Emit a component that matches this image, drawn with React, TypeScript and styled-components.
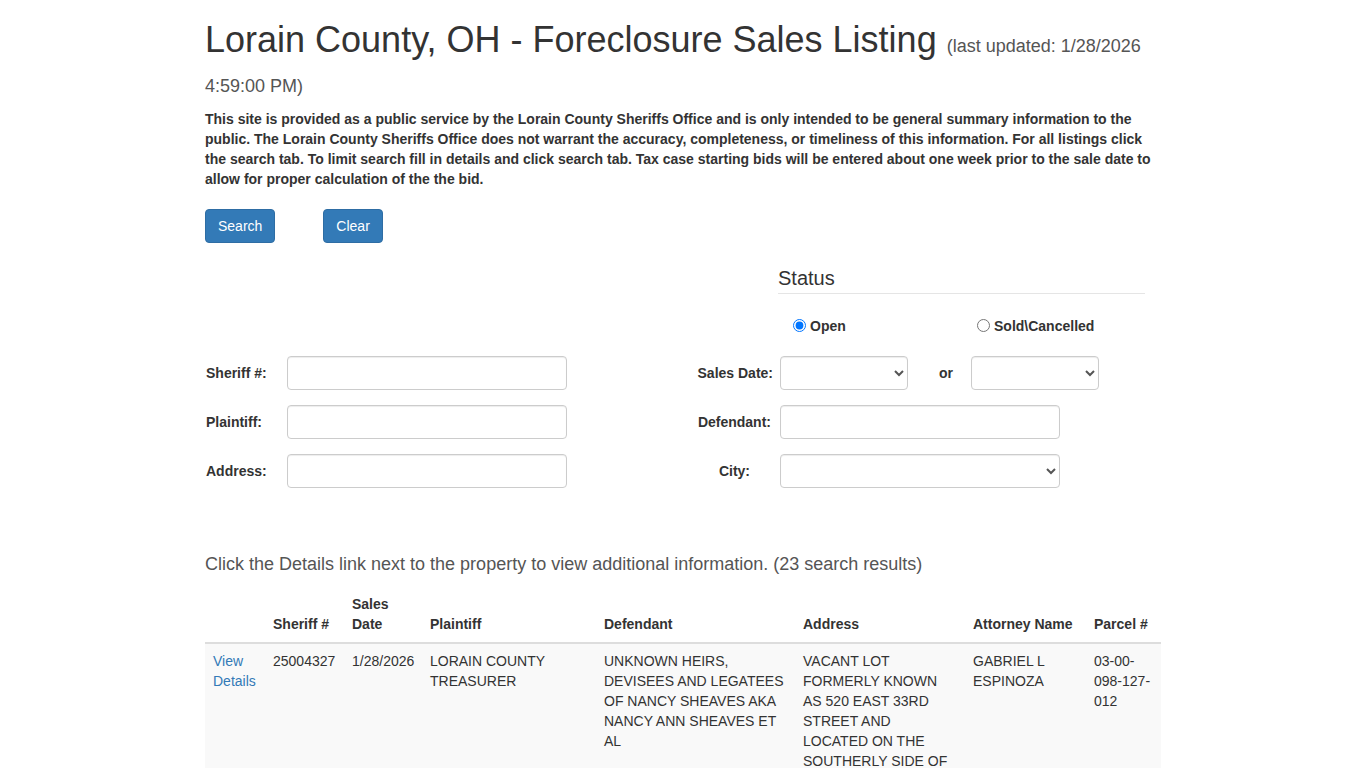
import React from "react";
import styled, { createGlobalStyle } from "styled-components";

const Global = createGlobalStyle`
  html, body { margin: 0; padding: 0; background: #fff; }
  body {
    font-family: "Liberation Sans", Arial, Helvetica, sans-serif;
    font-size: 14px;
    line-height: 1.428571;
    color: #333;
  }
  * { box-sizing: border-box; }
`;

const Page = styled.div`
  width: 956px;
  margin: 0 auto;
`;

const Title = styled.h1`
  font-size: 36px;
  font-weight: 500;
  line-height: 1.1;
  margin: 20px 0 10px;
  color: #333;
`;

const Updated = styled.small`
  font-size: 18px;
  font-weight: 400;
  color: #555;
`;

const Notice = styled.p`
  font-size: 14px;
  font-weight: 700;
  line-height: 20px;
  margin: 0 0 20px;
  color: #333;
`;

const ButtonBar = styled.div`
  display: flex;
  gap: 48px;
`;

const Button = styled.button`
  font-family: inherit;
  font-size: 14px;
  line-height: 20px;
  height: 34px;
  padding: 6px 12px;
  color: #fff;
  background: #337ab7;
  border: 1px solid #2e6da4;
  border-radius: 4px;
  cursor: pointer;
`;

const StatusWrap = styled.div`
  margin: 24px 0 0 573px;
  width: 367px;
`;

const StatusTitle = styled.h4`
  font-size: 20px;
  font-weight: 500;
  line-height: 22px;
  margin: 0;
  padding-bottom: 4px;
  border-bottom: 1px solid #e5e5e5;
`;

const RadioRow = styled.div`
  display: grid;
  grid-template-columns: 184px 1fr;
  padding: 22px 0 0 15px;
`;

const RadioLabel = styled.label`
  display: flex;
  align-items: center;
  gap: 4px;
  font-size: 14px;
  font-weight: 700;
  line-height: 20px;
  input { margin: 0; width: 13px; height: 13px; position: relative; top: -1px; }
`;

const Form = styled.div`
  display: flex;
  flex-direction: column;
  gap: 15px;
  margin-top: 20px;
`;

const FormRow = styled.div`
  display: grid;
  grid-template-columns: 82px 280px 118px 476px;
  align-items: center;
`;

const Label = styled.label`
  font-size: 14px;
  font-weight: 700;
  line-height: 20px;
  padding-left: 1px;
`;

const RightCell = styled.div`
  display: flex;
  align-items: center;
`;

const RightLabel = styled.label<{ $pr?: number }>`
  width: 88px;
  margin-right: 7px;
  padding-right: ${(p) => p.$pr ?? 0}px;
  text-align: right;
  font-size: 14px;
  font-weight: 700;
  line-height: 20px;
  white-space: nowrap;
`;

const TextInput = styled.input<{ $w?: number }>`
  width: ${(p) => p.$w ?? 280}px;
  height: 34px;
  padding: 6px 12px;
  font-family: inherit;
  font-size: 14px;
  color: #555;
  background: #fff;
  border: 1px solid #ccc;
  border-radius: 4px;
  box-shadow: inset 0 1px 1px rgba(0, 0, 0, 0.075);
`;

const Select = styled.select<{ $w?: number }>`
  width: ${(p) => p.$w ?? 280}px;
  height: 34px;
  padding: 6px 6px;
  font-family: inherit;
  font-size: 14px;
  color: #555;
  background: #fff;
  border: 1px solid #ccc;
  border-radius: 4px;
  box-shadow: inset 0 1px 1px rgba(0, 0, 0, 0.075);
`;

const Or = styled.span`
  width: 63px;
  padding: 2px 0 0 31px;
  text-align: left;
  font-weight: 700;
  font-size: 14px;
`;

const Results = styled.div`
  margin-top: 66px;
  font-size: 18px;
  line-height: 20px;
  color: #555;
`;

const Table = styled.table`
  width: 956px;
  margin-top: 12px;
  border-collapse: collapse;
  border-spacing: 0;
  table-layout: fixed;
`;

const Th = styled.th<{ $w: number }>`
  width: ${(p) => p.$w}px;
  padding: 8px;
  text-align: left;
  vertical-align: bottom;
  font-weight: 700;
  line-height: 20px;
  border-bottom: 2px solid #ddd;
`;

const Tr = styled.tr<{ $striped?: boolean }>`
  background: ${(p) => (p.$striped ? "#f9f9f9" : "#fff")};
`;

const Td = styled.td`
  padding: 7px 8px 8px;
  vertical-align: top;
  line-height: 20px;
  border-top: 1px solid #ddd;
`;

const Link = styled.a`
  color: #337ab7;
  text-decoration: none;
`;

const columns = [
  { label: "", w: 60 },
  { label: "Sheriff #", w: 79 },
  { label: "Sales Date", w: 78 },
  { label: "Plaintiff", w: 174 },
  { label: "Defendant", w: 199 },
  { label: "Address", w: 170 },
  { label: "Attorney Name", w: 121 },
  { label: "Parcel #", w: 75 },
];

const rows = [
  {
    sheriff: "25004327",
    date: "1/28/2026",
    plaintiff: "LORAIN COUNTY TREASURER",
    defendant:
      "UNKNOWN HEIRS, DEVISEES AND LEGATEES OF NANCY SHEAVES AKA NANCY ANN SHEAVES ET AL",
    address:
      "VACANT LOT FORMERLY KNOWN AS 520 EAST 33RD STREET AND LOCATED ON THE SOUTHERLY SIDE OF EAST 33RD STREET LORAIN",
    attorney: "GABRIEL L ESPINOZA",
    parcel: "03-00-098-127-012",
  },
  {
    sheriff: "25004412",
    date: "1/28/2026",
    plaintiff: "LORAIN COUNTY TREASURER",
    defendant: "UNKNOWN HEIRS OF JOHN DOE ET AL",
    address: "1234 OBERLIN AVENUE",
    attorney: "GABRIEL L ESPINOZA",
    parcel: "02-01-004-113-009",
  },
];

export default function App() {
  return (
    <>
      <Global />
      <Page>
        <Title>
          Lorain County, OH - Foreclosure Sales Listing{" "}
          <Updated>(last updated: 1/28/2026 4:59:00 PM)</Updated>
        </Title>
        <Notice>
          This site is provided as a public service by the Lorain County Sheriffs Office and is only
          intended to be general summary information to the public. The Lorain County Sheriffs Office
          does not warrant the accuracy, completeness, or timeliness of this information. For all
          listings click the search tab. To limit search fill in details and click search tab. Tax
          case starting bids will be entered about one week prior to the sale date to allow for
          proper calculation of the the bid.
        </Notice>
        <ButtonBar>
          <Button>Search</Button>
          <Button>Clear</Button>
        </ButtonBar>

        <StatusWrap>
          <StatusTitle>Status</StatusTitle>
          <RadioRow>
            <RadioLabel>
              <input type="radio" name="status" defaultChecked />
              Open
            </RadioLabel>
            <RadioLabel>
              <input type="radio" name="status" />
              Sold\Cancelled
            </RadioLabel>
          </RadioRow>
        </StatusWrap>

        <Form>
          <FormRow>
            <Label>Sheriff #:</Label>
            <TextInput />
            <span />
            <RightCell>
              <RightLabel>Sales Date:</RightLabel>
              <Select $w={128}>
                <option></option>
              </Select>
              <Or>or</Or>
              <Select $w={128}>
                <option></option>
              </Select>
            </RightCell>
          </FormRow>
          <FormRow>
            <Label>Plaintiff:</Label>
            <TextInput />
            <span />
            <RightCell>
              <RightLabel $pr={2}>Defendant:</RightLabel>
              <TextInput />
            </RightCell>
          </FormRow>
          <FormRow>
            <Label>Address:</Label>
            <TextInput />
            <span />
            <RightCell>
              <RightLabel $pr={23}>City:</RightLabel>
              <Select>
                <option></option>
              </Select>
            </RightCell>
          </FormRow>
        </Form>

        <Results>
          Click the Details link next to the property to view additional information. (23 search
          results)
        </Results>

        <Table>
          <thead>
            <tr>
              {columns.map((c, i) => (
                <Th key={i} $w={c.w}>
                  {c.label}
                </Th>
              ))}
            </tr>
          </thead>
          <tbody>
            {rows.map((r, i) => (
              <Tr key={r.sheriff} $striped={i % 2 === 0}>
                <Td>
                  <Link href="#">View Details</Link>
                </Td>
                <Td>{r.sheriff}</Td>
                <Td>{r.date}</Td>
                <Td>{r.plaintiff}</Td>
                <Td>{r.defendant}</Td>
                <Td>{r.address}</Td>
                <Td>{r.attorney}</Td>
                <Td>{r.parcel}</Td>
              </Tr>
            ))}
          </tbody>
        </Table>
      </Page>
    </>
  );
}
